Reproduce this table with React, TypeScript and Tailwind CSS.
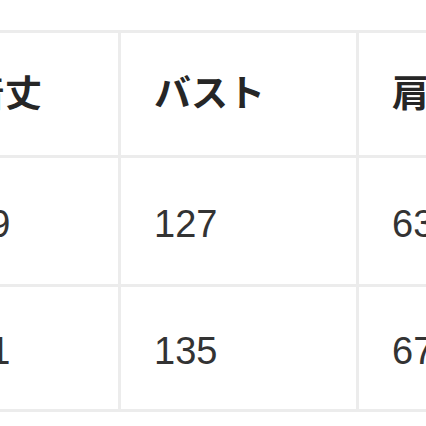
const headers = ['着丈', 'バスト', '肩幅']
const rows = [
  ['69', '127', '63'],
  ['71', '135', '67'],
]

export default function App() {
  return (
    <div className="w-[426px] h-[426px] overflow-hidden bg-white">
      <div className="pt-[30px] -ml-[68px]">
        <div
          className="grid grid-cols-[183px_235px_235px] gap-[3px] p-[3px] bg-[#ececec] w-max"
          style={{ fontFamily: '"Liberation Sans", "Noto Sans CJK JP", sans-serif' }}
        >
          {headers.map(h => (
            <div key={h} className="h-[122px] bg-white flex items-center pl-[33px] pb-[6px]">
              <span className="text-[37px] font-bold text-[#262626] leading-none" style={{ fontFamily: '"Noto Sans CJK JP", sans-serif' }}>{h}</span>
            </div>
          ))}
          {rows.map((r, i) => (
            r.map((v, j) => (
              <div key={`${i}-${j}`} className={`${i === 0 ? 'h-[126px]' : 'h-[122px]'} bg-white flex items-center pl-[33px] pt-[5px]`}>
                <span className="text-[38px] text-[#333333] leading-none">{v}</span>
              </div>
            ))
          ))}
        </div>
      </div>
    </div>
  )
}
